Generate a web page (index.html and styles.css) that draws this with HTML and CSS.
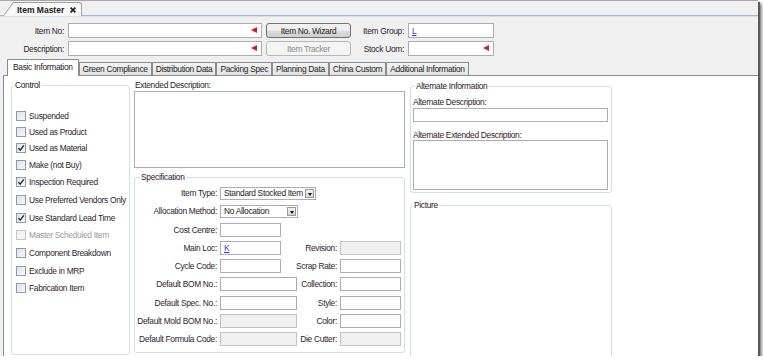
FILE: index.html
```html
<!DOCTYPE html>
<html lang="en">
<head>
  <meta charset="UTF-8" />
  <title>Item Master</title>
  <link rel="stylesheet" href="styles.css">
</head>
<body>
<div class="window">

  <!-- document tab strip -->
  <div class="doc-strip">
    <div class="doc-tab">
      Item Master
      <svg class="doc-close" width="6" height="6" viewBox="0 0 6 6"><path d="M0.6 0.6 L5.4 5.4 M5.4 0.6 L0.6 5.4" stroke="#1a1a1a" stroke-width="1.6"/></svg>
    </div>
  </div>

  <!-- header fields -->
  <div class="header">
    <label class="hdr-label">Item No:</label>
    <div class="field req"></div>
    <button class="btn">Item No. Wizard</button>
    <label class="hdr-label">Item Group:</label>
    <div class="field"><a class="link">L</a></div>

    <label class="hdr-label">Description:</label>
    <div class="field req"></div>
    <button class="btn" disabled>Item Tracker</button>
    <label class="hdr-label">Stock Uom:</label>
    <div class="field req"></div>
  </div>

  <!-- page tabs -->
  <div class="tabs">
    <span class="tab active">Basic Information</span>
    <span class="tab">Green Compliance</span>
    <span class="tab">Distribution Data</span>
    <span class="tab">Packing Spec</span>
    <span class="tab">Planning Data</span>
    <span class="tab">China Custom</span>
    <span class="tab">Additional Information</span>
  </div>

  <div class="page">

    <fieldset class="group control">
      <legend>Control</legend>
      <div class="checks">
        <div class="check short"><span class="box"></span>Suspended</div>
        <div class="check short"><span class="box"></span>Used as Product</div>
        <div class="check short"><span class="box on"><svg width="8" height="8" viewBox="0 0 8 8"><path d="M1.4 4.1 L3.2 6.2 L6.8 1.4" fill="none" stroke="#2b2b2b" stroke-width="1.4"/></svg></span>Used as Material</div>
        <div class="check"><span class="box"></span>Make (not Buy)</div>
        <div class="check"><span class="box on"><svg width="8" height="8" viewBox="0 0 8 8"><path d="M1.4 4.1 L3.2 6.2 L6.8 1.4" fill="none" stroke="#2b2b2b" stroke-width="1.4"/></svg></span>Inspection Required</div>
        <div class="check"><span class="box"></span>Use Preferred Vendors Only</div>
        <div class="check"><span class="box on"><svg width="8" height="8" viewBox="0 0 8 8"><path d="M1.4 4.1 L3.2 6.2 L6.8 1.4" fill="none" stroke="#2b2b2b" stroke-width="1.4"/></svg></span>Use Standard Lead Time</div>
        <div class="check disabled"><span class="box"></span>Master Scheduled Item</div>
        <div class="check"><span class="box"></span>Component Breakdown</div>
        <div class="check"><span class="box"></span>Exclude in MRP</div>
        <div class="check"><span class="box"></span>Fabrication Item</div>
      </div>
    </fieldset>

    <div class="col-mid">
      <div class="caption">Extended Description:</div>
      <div class="memo ext-desc"></div>

      <fieldset class="group spec">
        <legend>Specification</legend>
        <div class="spec-grid">
          <label class="lbl">Item Type:</label>
          <div class="combo wide"><span class="combo-text">Standard Stocked Item</span><span class="combo-btn"></span></div>

          <label class="lbl">Allocation Method:</label>
          <div class="combo"><span class="combo-text">No Allocation</span><span class="combo-btn"></span></div>

          <label class="lbl">Cost Centre:</label>
          <div class="field short"></div>

          <label class="lbl">Main Loc:</label>
          <div class="field short"><a class="link">K</a></div>
          <label class="lbl lbl2">Revision:</label>
          <div class="field off"></div>

          <label class="lbl">Cycle Code:</label>
          <div class="field short"></div>
          <label class="lbl lbl2">Scrap Rate:</label>
          <div class="field"></div>

          <label class="lbl">Default BOM No.:</label>
          <div class="field"></div>
          <label class="lbl lbl2">Collection:</label>
          <div class="field"></div>

          <label class="lbl">Default Spec. No.:</label>
          <div class="field"></div>
          <label class="lbl lbl2">Style:</label>
          <div class="field"></div>

          <label class="lbl">Default Mold BOM No.:</label>
          <div class="field off"></div>
          <label class="lbl lbl2">Color:</label>
          <div class="field"></div>

          <label class="lbl">Default Formula Code:</label>
          <div class="field off"></div>
          <label class="lbl lbl2">Die Cutter:</label>
          <div class="field off"></div>
        </div>
      </fieldset>
    </div>

    <div class="col-right">
      <fieldset class="group alt">
        <legend>Alternate Information</legend>
        <div class="caption alt-cap">Alternate Description:</div>
        <div class="field alt-field"></div>
        <div class="caption alt-cap2">Alternate Extended Description:</div>
        <div class="memo alt-memo"></div>
      </fieldset>

      <fieldset class="group picture">
        <legend>Picture</legend>
      </fieldset>
    </div>

  </div>
</div>
</body>
</html>
```

FILE: styles.css
```css
body {
  margin: 0;
  background: #fff;
  font-family: "Liberation Sans", Arial, sans-serif;
  font-size: 8.4px;
  letter-spacing: -0.3px;
  color: #2e1d2e;
}

.window {
  width: 758px;
  height: 356px;
  background: #f0f0f0;
  display: flex;
  flex-direction: column;
  overflow: hidden;
  box-shadow: 2px 2px 1px #5a5a5a, 4px 4px 3px rgba(0, 0, 0, 0.45);
}

/* document tab strip */
.doc-strip {
  height: 14px;
  flex-shrink: 0;
  border-top: 1px solid #a7a7a7;
  border-bottom: 1px solid #a8b7ca;
  box-shadow: 0 1px 0 #d8dfe8;
  padding-left: 13px;
  display: flex;
  align-items: flex-end;
}

.doc-tab {
  position: relative;
  z-index: 0;
  height: 14px;
  margin-bottom: -1px;
  box-sizing: border-box;
  padding: 0 5px 0 4px;
  display: flex;
  align-items: center;
  gap: 6px;
  font-weight: bold;
  font-size: 8.5px;
  letter-spacing: 0;
  color: #1a1a1a;
  background: #f8f8f8;
  border: 1px solid #a0a0a0;
  border-left: none;
  border-bottom: none;
  border-radius: 0 3px 0 0;
}

.doc-tab::before {
  content: "";
  position: absolute;
  z-index: -1;
  left: -10px;
  top: -1px;
  bottom: 0;
  width: 14px;
  background: #f8f8f8;
  border-left: 1px solid #a0a0a0;
  border-top: 1px solid #a0a0a0;
  transform: skewX(-36deg);
  transform-origin: bottom left;
}

/* header */
.header {
  flex-shrink: 0;
  display: grid;
  grid-template-columns: 64px 194px 85px 49px 86px;
  grid-auto-rows: 15px;
  column-gap: 4px;
  row-gap: 3px;
  padding: 7px 0 3px;
  align-items: center;
}

.hdr-label {
  text-align: right;
  white-space: nowrap;
}

.field {
  position: relative;
  box-sizing: border-box;
  height: 15px;
  background: #fff;
  border: 1px solid #abadb3;
  display: flex;
  align-items: center;
}

.field.req::after {
  content: "";
  position: absolute;
  right: 4px;
  top: 3px;
  border-right: 6px solid #e3161c;
  border-top: 3.5px solid transparent;
  border-bottom: 3.5px solid transparent;
}

.link {
  padding-left: 3px;
  color: #3535c8;
  text-decoration: underline;
  font-size: 8.5px;
}

.btn {
  height: 15px;
  padding: 0;
  font: inherit;
  letter-spacing: inherit;
  color: #1c1c1c;
  border: 1px solid #707070;
  border-radius: 3px;
  background: linear-gradient(#f3f3f3 0%, #ebebeb 50%, #dddddd 51%, #cfcfcf 100%);
}

.btn:disabled {
  color: #8a8a8a;
  border-color: #b4b8bb;
  background: #f4f4f4;
}

/* page tabs */
.tabs {
  flex-shrink: 0;
  height: 16px;
  display: flex;
  align-items: flex-end;
  padding-left: 7px;
}

.tab {
  box-sizing: border-box;
  height: 13px;
  padding: 0 3px;
  line-height: 12px;
  white-space: nowrap;
  color: #1c1c1c;
  border: 1px solid #898c95;
  border-bottom: none;
  background: linear-gradient(#f4f4f4, #e2e2e2);
}

.tab.active {
  position: relative;
  z-index: 1;
  height: 17px;
  margin-bottom: -1px;
  padding: 0 5px;
  line-height: 14px;
  background: #fff;
}

/* tab page */
.page {
  flex: 1;
  min-height: 0;
  margin-left: 3px;
  background: #fff;
  border-top: 1px solid #898c95;
  border-left: 1px solid #898c95;
  display: flex;
  gap: 4px;
  padding: 4px 0 1px 7px;
  overflow: hidden;
}

.group {
  margin: 0;
  min-width: 0;
  box-sizing: border-box;
  border: 1px solid #d3dde6;
  border-radius: 3px;
  padding: 0;
}

.group legend {
  padding: 0 1px;
  line-height: 10px;
  color: #2a1a2a;
}

/* control */
.control {
  width: 119px;
  flex-shrink: 0;
  padding: 0 0 0 4px;
}

.control legend {
  margin-left: -2px;
}

.checks {
  padding-top: 17.7px;
}

.check {
  height: 17.7px;
  display: flex;
  align-items: center;
  gap: 3px;
  white-space: nowrap;
}

.check.short {
  height: 16px;
}

.check.disabled {
  color: #9a9a9a;
}

.box {
  width: 10px;
  height: 10px;
  box-sizing: border-box;
  border: 1px solid #8e9aa7;
  background: linear-gradient(135deg, #dde3ea, #f8f9fa);
  display: flex;
  align-items: center;
  justify-content: center;
}

.check.disabled .box {
  border-color: #c6c6c6;
  background: #f4f4f4;
}

/* middle column */
.col-mid {
  width: 271px;
  flex-shrink: 0;
  display: flex;
  flex-direction: column;
}

.caption {
  line-height: 10px;
  white-space: nowrap;
}

.col-mid .caption {
  padding-left: 1px;
}

.memo {
  box-sizing: border-box;
  background: #fff;
  border: 1px solid #abadb3;
}

.ext-desc {
  margin-top: 1px;
  height: 77px;
}

.spec {
  flex: 1;
  margin-top: 4px;
  margin-bottom: 2px;
  padding: 4px 2px 0 0;
}

.spec legend {
  margin-left: 5px;
}

.spec-grid {
  display: grid;
  grid-template-columns: 82px 77px 37px 61px;
  grid-auto-rows: 14px;
  column-gap: 3px;
  row-gap: 4.3px;
  align-items: center;
}

.lbl {
  grid-column: 1;
  display: flex;
  justify-content: flex-end;
  white-space: nowrap;
}

.lbl2 {
  grid-column: 3;
}

.spec-grid .field {
  height: 14px;
}

.field.short {
  width: 61px;
}

.field.off {
  background: #f0f0f0;
  border-color: #c2c2c2;
}

.combo {
  grid-column: 2 / span 3;
  justify-self: start;
  width: 78px;
  height: 13px;
  box-sizing: border-box;
  display: flex;
  background: #fff;
  border: 1px solid #abadb3;
}

.combo.wide {
  width: 96px;
}

.combo-text {
  flex: 1;
  overflow: hidden;
  white-space: nowrap;
  padding-left: 3px;
  line-height: 11px;
  color: #1c1c1c;
}

.combo-btn {
  position: relative;
  width: 9px;
  margin: 1px;
  box-sizing: border-box;
  border: 1px solid #9a9a9a;
  background: linear-gradient(#f2f2f2, #d6d6d6);
}

.combo-btn::after {
  content: "";
  position: absolute;
  left: 1.5px;
  top: 3px;
  border-top: 3px solid #111;
  border-left: 2.5px solid transparent;
  border-right: 2.5px solid transparent;
}

/* right column */
.col-right {
  width: 202px;
  flex-shrink: 0;
  margin: 1px 0 0 1px;
  display: flex;
  flex-direction: column;
}

.alt {
  padding: 6px 3px 2px 2px;
}

.alt legend,
.picture legend {
  margin-left: 2px;
}

.alt-field {
  margin-top: 1px;
  height: 14px;
}

.alt-cap2 {
  margin-top: 8px;
}

.alt-memo {
  height: 50px;
}

.picture {
  flex-shrink: 0;
  height: 170px;
  margin-top: 7px;
}
```
